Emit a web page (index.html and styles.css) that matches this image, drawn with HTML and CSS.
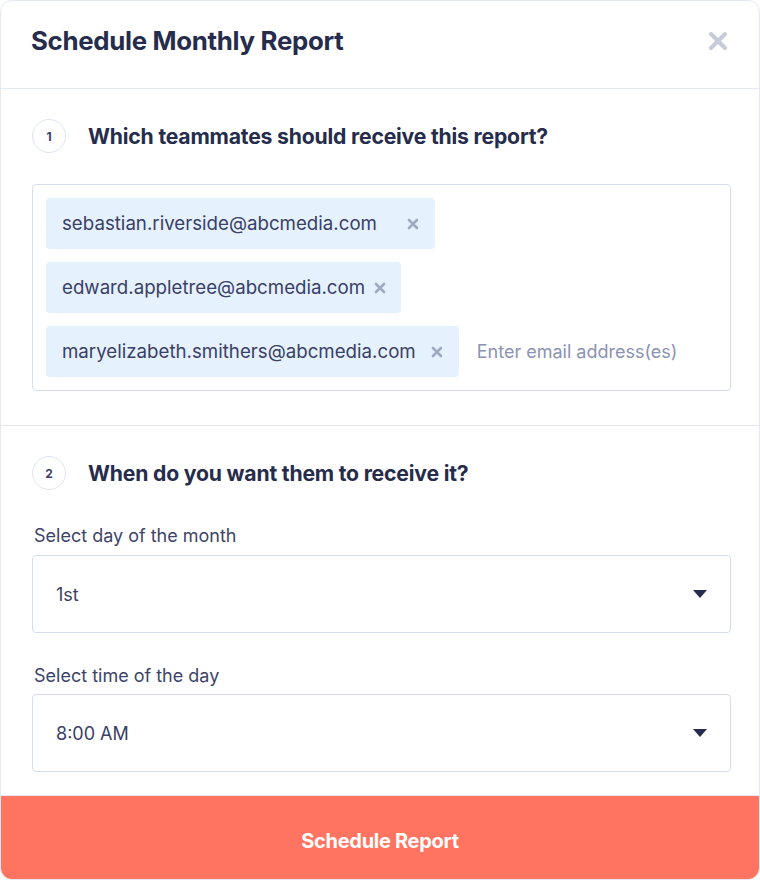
FILE: index.html
```html
<!DOCTYPE html>
<html lang="en">
<head>
<meta charset="utf-8">
<title>Schedule Monthly Report</title>
<link rel="stylesheet" href="styles.css">
</head>
<body>
<div class="modal">
  <header class="modal-header">
    <h1 class="modal-title">Schedule Monthly Report</h1>
    <button class="close-btn" aria-label="Close">
      <svg width="20" height="20" viewBox="0 0 20 20"><path d="M3 3 L17 17 M17 3 L3 17" stroke="#c6cbda" stroke-width="4" stroke-linecap="round" fill="none"/></svg>
    </button>
  </header>

  <section class="section section-one">
    <div class="step">
      <span class="step-num">1</span>
      <h2 class="step-title">Which teammates should receive this report?</h2>
    </div>
    <div class="email-box">
      <span class="chip chip-wide">sebastian.riverside@abcmedia.com
        <svg class="chip-x" width="12" height="12" viewBox="0 0 12 12"><path d="M2 2 L10 10 M10 2 L2 10" stroke="#a1a8c1" stroke-width="2.6" stroke-linecap="round" fill="none"/></svg>
      </span>
      <span class="chip chip-tight">edward.appletree@abcmedia.com
        <svg class="chip-x" width="12" height="12" viewBox="0 0 12 12"><path d="M2 2 L10 10 M10 2 L2 10" stroke="#a1a8c1" stroke-width="2.6" stroke-linecap="round" fill="none"/></svg>
      </span>
      <span class="chip">maryelizabeth.smithers@abcmedia.com
        <svg class="chip-x" width="12" height="12" viewBox="0 0 12 12"><path d="M2 2 L10 10 M10 2 L2 10" stroke="#a1a8c1" stroke-width="2.6" stroke-linecap="round" fill="none"/></svg>
      </span>
      <span class="placeholder">Enter email address(es)</span>
    </div>
  </section>

  <section class="section section-two">
    <div class="step">
      <span class="step-num">2</span>
      <h2 class="step-title">When do you want them to receive it?</h2>
    </div>
    <label class="field-label first">Select day of the month</label>
    <div class="select">
      <span>1st</span>
      <svg width="14" height="8" viewBox="0 0 14 8"><path d="M0 0 H14 L7 8 Z" fill="#262c4c"/></svg>
    </div>
    <label class="field-label">Select time of the day</label>
    <div class="select">
      <span>8:00 AM</span>
      <svg width="14" height="8" viewBox="0 0 14 8"><path d="M0 0 H14 L7 8 Z" fill="#262c4c"/></svg>
    </div>
  </section>

  <button class="submit">Schedule Report</button>
</div>
</body>
</html>
```

FILE: styles.css
```css
* { box-sizing: border-box; }
html, body { margin: 0; padding: 0; background: #ffffff; }
body {
  font-family: Inter, "Noto Sans", sans-serif;
  color: #262c4c;
}
.modal {
  width: 760px;
  height: 880px;
  border: 1px solid #e3e8f1;
  border-radius: 12px;
  overflow: hidden;
  display: flex;
  flex-direction: column;
  background: #fff;
}
.modal-header {
  height: 88px;
  flex: 0 0 88px;
  display: flex;
  align-items: center;
  justify-content: space-between;
  padding: 0 31px 8px 30px;
  border-bottom: 1px solid #e3e8f1;
}
.modal-title {
  margin: 0;
  font-size: 25.8px;
  font-weight: 700;
  letter-spacing: -0.3px;
  color: #262c4c;
}
.close-btn {
  border: 0;
  background: none;
  padding: 0;
  display: flex;
  cursor: pointer;
}
.section {
  padding: 30px 28px 34px 31px;
  border-bottom: 1px solid #e3e8f1;
}
.step {
  display: flex;
  align-items: center;
  gap: 22px;
}
.step-num {
  width: 34px;
  height: 34px;
  border: 1.5px solid #dee4f0;
  border-radius: 50%;
  display: flex;
  align-items: center;
  justify-content: center;
  font-size: 12px;
  font-weight: 700;
  color: #3a4066;
}
.step-title {
  margin: 0;
  font-size: 21.2px;
  font-weight: 700;
  letter-spacing: -0.2px;
  color: #262c4c;
}
.email-box {
  margin-top: 31px;
  height: 207px;
  border: 1.5px solid #d6deeb;
  border-radius: 4px;
  padding: 13px 13px;
  display: flex;
  flex-wrap: wrap;
  align-content: flex-start;
  align-items: center;
  gap: 13px 18px;
}
.chip {
  height: 51px;
  display: inline-flex;
  align-items: center;
  gap: 15px;
  padding: 0 16px 0 16px;
  background: #e5f1fd;
  border-radius: 4px;
  font-size: 18.7px;
  color: #3a4066;
}
.chip-wide { gap: 30px; }
.chip-tight { gap: 9px; padding-right: 15px; }
.chip-x { flex: none; }
.placeholder {
  font-size: 18px;
  color: #8b93b2;
}
.section-two {
  padding-top: 30px;
  padding-bottom: 23px;
}
.field-label {
  display: block;
  font-size: 18px;
  line-height: 22px;
  color: #3e4468;
  margin: 32px 0 7px 2px;
}
.field-label.first { margin: 35px 0 8px 2px; }
.select {
  height: 78px;
  border: 1.5px solid #d6deeb;
  border-radius: 4px;
  display: flex;
  align-items: center;
  justify-content: space-between;
  padding: 0 23px 0 23px;
  font-size: 18px;
  color: #3a4066;
}
.submit {
  flex: 1;
  border: 0;
  margin: 0;
  padding: 6px 0 0;
  background: #ff7461;
  color: #ffffff;
  font-family: Inter, "Noto Sans", sans-serif;
  font-size: 20px;
  font-weight: 700;
  letter-spacing: -0.3px;
  cursor: pointer;
}
```
